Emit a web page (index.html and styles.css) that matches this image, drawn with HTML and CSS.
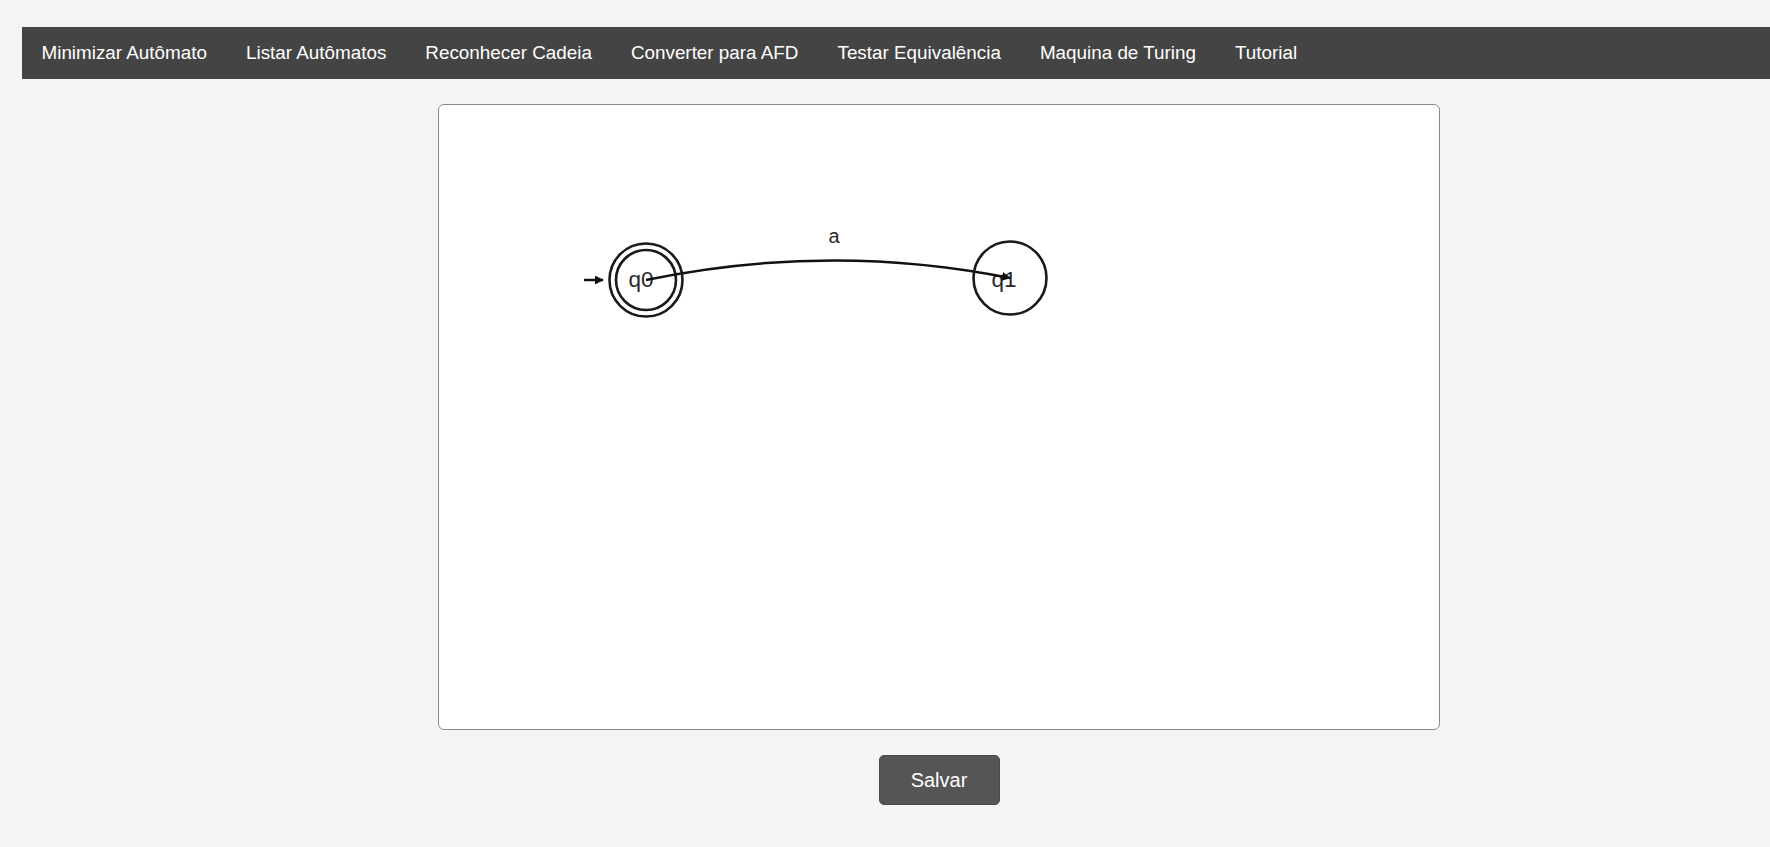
FILE: index.html
```html
<!DOCTYPE html>
<html lang="pt">
<head>
<meta charset="utf-8">
<title>Autômatos</title>
<link rel="stylesheet" href="styles.css">
</head>
<body>
<div class="page">
  <nav class="menu">
    <a class="menu-item" href="#">Minimizar Autômato</a>
    <a class="menu-item" href="#">Listar Autômatos</a>
    <a class="menu-item" href="#">Reconhecer Cadeia</a>
    <a class="menu-item" href="#">Converter para AFD</a>
    <a class="menu-item" href="#">Testar Equivalência</a>
    <a class="menu-item" href="#">Maquina de Turing</a>
    <a class="menu-item" href="#">Tutorial</a>
  </nav>
  <main class="content">
    <div class="canvas-box">
      <svg class="diagram" width="1000" height="624" viewBox="0 0 1000 624" xmlns="http://www.w3.org/2000/svg">
        <defs>
          <marker id="arrow" viewBox="0 0 10 10" refX="9" refY="5" markerWidth="3.6" markerHeight="3.6" orient="auto">
            <path d="M0 0 L10 5 L0 10 z" fill="#111"/>
          </marker>
        </defs>
        <line x1="145" y1="175" x2="164" y2="175" stroke="#111" stroke-width="2.5" marker-end="url(#arrow)"/>
        <circle cx="207" cy="175" r="36.5" fill="none" stroke="#1a1a1a" stroke-width="2.6"/>
        <circle cx="207" cy="175" r="30" fill="none" stroke="#1a1a1a" stroke-width="2.6"/>
        <circle cx="571" cy="173" r="36.5" fill="none" stroke="#1a1a1a" stroke-width="2.6"/>
        <text class="state-label" x="202" y="182">q0</text>
        <text class="state-label" x="565" y="182">q1</text>
        <path d="M 207 175 Q 391 137 571 173" fill="none" stroke="#111" stroke-width="2.5" marker-end="url(#arrow)"/>
        <text class="edge-label" x="395" y="138">a</text>
      </svg>
    </div>
    <button class="save-btn" type="button">Salvar</button>
  </main>
</div>
</body>
</html>
```

FILE: styles.css
```css
html, body {
  margin: 0;
  padding: 0;
  background: #f4f4f4;
  overflow: hidden;
}

body {
  font-family: "Liberation Sans", Arial, sans-serif;
}

.page {
  width: 1834px;
  margin-left: 22px;
  padding-top: 27px;
}

.menu {
  display: flex;
  align-items: center;
  height: 52px;
  background: #444444;
}

.menu-item {
  color: #ffffff;
  text-decoration: none;
  font-size: 18.85px;
  padding: 0 19.5px;
  line-height: 52px;
}

.content {
  display: flex;
  flex-direction: column;
  align-items: center;
  padding-top: 25px;
}

.canvas-box {
  width: 1000px;
  height: 624px;
  background: #ffffff;
  border: 1px solid #8a8a8a;
  border-radius: 6px;
}

.diagram {
  display: block;
}

.state-label {
  font-family: "Liberation Sans", Arial, sans-serif;
  font-size: 22.5px;
  fill: #2a2a2a;
  text-anchor: middle;
}

.edge-label {
  font-family: "Liberation Sans", Arial, sans-serif;
  font-size: 20px;
  fill: #2a2a2a;
  text-anchor: middle;
}

.save-btn {
  margin-top: 25px;
  width: 121px;
  height: 50px;
  background: #555555;
  color: #ffffff;
  border: 1px solid #4a4a4a;
  border-radius: 5px;
  font-family: "Liberation Sans", Arial, sans-serif;
  font-size: 20px;
  padding: 0;
}
```
